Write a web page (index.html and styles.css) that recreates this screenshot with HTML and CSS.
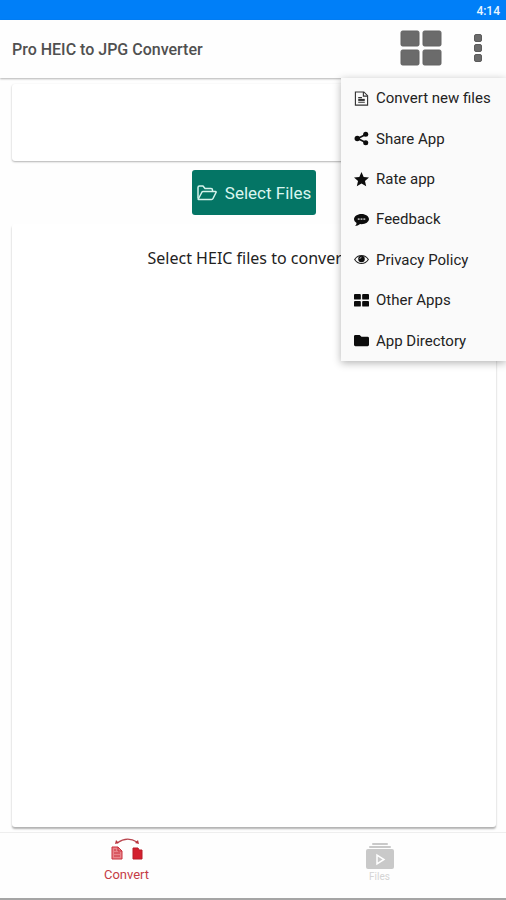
FILE: index.html
```html
<!DOCTYPE html>
<html lang="en">
<head>
    <meta charset="UTF-8">
    <meta name="viewport" content="width=device-width, initial-scale=1.0">
    <title>Pro HEIC to JPG Converter</title>
    <link rel="stylesheet" href="styles.css">
</head>
<body>
    <div class="status-bar">4:14</div>

    <header class="toolbar">
        <h1>Pro HEIC to JPG Converter</h1>
        <button class="icon-button grid-button" aria-label="Other apps">
            <svg width="42" height="36" viewBox="0 0 42 36" fill="#6b6b6b" stroke="#656565">
                <rect x="1" y="1" width="18" height="15" rx="1.5"/>
                <rect x="23" y="1" width="18" height="15" rx="1.5"/>
                <rect x="1" y="20" width="18" height="15" rx="1.5"/>
                <rect x="23" y="20" width="18" height="15" rx="1.5"/>
            </svg>
        </button>
        <button class="icon-button" aria-label="Menu">
            <svg width="8" height="28" viewBox="0 0 8 28" fill="#6b6b6b" stroke="#5c5c5c">
                <rect x=".5" y=".5" width="7" height="7" rx="1.5"/>
                <rect x=".5" y="10.5" width="7" height="7" rx="1.5"/>
                <rect x=".5" y="20.5" width="7" height="7" rx="1.5"/>
            </svg>
        </button>

        <nav class="menu">
            <a href="#">
                <svg viewBox="0 0 16 16"><g fill="none" stroke="#333" stroke-width="1.200"><path d="M1.500 1h9l4 4v10h-13z"/><path d="M10 1v4.500h4M4.500 7h4M4.500 12h7"/><path d="M4.500 9.500h7" stroke-width="2.200"/></g></svg>
                Convert new files
            </a>
            <a href="#">
                <svg viewBox="0 0 16 16"><path d="M13 3.500L4 8l9 4.500" fill="none" stroke="#111" stroke-width="1.800"/><circle cx="12.500" cy="3.500" r="2.700"/><circle cx="3.500" cy="8" r="2.900"/><circle cx="12.500" cy="12.500" r="2.700"/></svg>
                Share App
            </a>
            <a href="#">
                <svg viewBox="0 0 16 16"><path d="M8 0l2.300 5.300 5.700.5-4.300 3.800 1.300 5.700L8 12.300l-5 3 1.300-5.700L0 5.800l5.700-.5z"/></svg>
                Rate app
            </a>
            <a href="#">
                <svg viewBox="0 0 16 16"><path d="M8 2c4.500 0 8 2.500 8 5.500S12.500 13 8 13l-1.500-.1C5 14.300 3 15 1 15c1-1 1.600-2 1.700-3.400C1 10.600 0 9.100 0 7.500 0 4.500 3.500 2 8 2z"/><path d="M4 7.500h2m1 0h2m1 0h2" stroke="#aaa" stroke-width="1.800"/></svg>
                Feedback
            </a>
            <a href="#">
                <svg viewBox="0 0 16 16"><path d="M.7 8C4.300 2.300 11.700 2.300 15.300 8 11.700 13.700 4.300 13.700.7 8z" fill="none" stroke="#222" stroke-width="1.200"/><circle cx="8" cy="7.500" r="3.500"/><path d="M6.200 7.300Q6.400 5.700 8 5.500" fill="none" stroke="#bbb"/></svg>
                Privacy Policy
            </a>
            <a href="#">
                <svg viewBox="0 0 16 16"><rect y="1" width="7.300" height="6" rx="1"/><rect x="8.700" y="1" width="7.300" height="6" rx="1"/><rect y="8.500" width="7.300" height="6" rx="1"/><rect x="8.700" y="8.500" width="7.300" height="6" rx="1"/></svg>
                Other Apps
            </a>
            <a href="#">
                <svg viewBox="0 0 16 16"><path d="M0 3.500Q0 2 1.500 2H6l2 2h6.500Q16 4 16 5.500v7q0 1.500-1.500 1.500h-13Q0 14 0 12.500z"/></svg>
                App Directory
            </a>
        </nav>
    </header>

    <main>
        <section class="card banner"></section>
        <button class="select-button">
            <svg width="20" height="16" viewBox="0 0 20 16" fill="none" stroke="#d5f3ec" stroke-width="1.500" stroke-linejoin="round"><path d="M1 13.500V2.500Q1 1 2.500 1H6l2 2.500h6Q15.500 3.500 15.500 5v1.500"/><path d="M1.300 14L5 7q.3-.5 1-.5h12.500q1 0 .5 1L16 13.500q-.4 1-1.500 1H2q-1 0-.7-.5z"/></svg>
            Select Files
        </button>
        <section class="card files">
            <p>Select HEIC files to convert...</p>
        </section>
    </main>

    <nav class="tabs">
        <a href="#" class="tab active">
            <svg width="34" height="24" viewBox="0 0 34 24">
                <path d="M7 5Q17-2 27 4" fill="none" stroke="#b8454e" stroke-width="1.200"/>
                <path d="M5 6l1-4 3 3zM29 6l-4-1 3-3z" fill="#b8333d"/>
                <path d="M2 9h6l4 4v8H2z" fill="#e8858b" stroke="#c92f3a"/>
                <path d="M8 9v4h4M4 12h2M4 15h6M4 18h6" fill="none" stroke="#c92f3a"/>
                <path d="M23 10h5l1 2h3v9h-9z" fill="#d3202e" stroke="#b91c29"/>
            </svg>
            Convert
        </a>
        <a href="#" class="tab">
            <svg width="28" height="26" viewBox="0 0 28 26" fill="#c9c9c9">
                <rect x="6" width="16" height="2" rx="1"/>
                <rect x="3" y="3" width="22" height="2" rx="1"/>
                <rect y="6" width="28" height="20" rx="2"/>
                <path d="M11 12v9l7-4.500z" fill="none" stroke="#fff" stroke-width="1.500"/>
            </svg>
            <small>Files</small>
        </a>
    </nav>
</body>
</html>
```
FILE: styles.css
```css
* {
    box-sizing: border-box;
}
body {
    margin: 0;
    min-height: 100vh;
    display: flex;
    flex-direction: column;
    background: #fefefe;
    color: #222;
    font-family: Roboto, "Liberation Sans", sans-serif;
}
button {
    border: none;
    cursor: pointer;
    font-family: inherit;
}
a {
    color: inherit;
    text-decoration: none;
}

/* top */
.status-bar {
    height: 20px;
    padding-right: 6px;
    background: #007ff8;
    color: #e8f6ff;
    font-size: 12px;
    font-weight: 500;
    line-height: 22px;
    text-align: right;
}
.toolbar {
    position: relative;
    display: flex;
    align-items: center;
    height: 58px;
    padding: 0 24px 2px 12px;
    background: #fefefe;
    box-shadow: 0 1px 2px rgba(0,0,0,0.3);
}
.toolbar h1 {
    flex: 1;
    margin: 0;
    padding-top: 4px;
    color: #505050;
    font-size: 16px;
    font-weight: 500;
    line-height: 22px;
}
.icon-button {
    display: flex;
    padding: 0;
    background: none;
}
.grid-button {
    margin-right: 32px;
}

/* overflow menu */
.menu {
    position: absolute;
    top: 58px;
    right: 0;
    z-index: 2;
    display: grid;
    width: 165px;
    height: 283px;
    background: #fafafa;
    box-shadow: 0 2px 8px rgba(0,0,0,0.3);
}
.menu a {
    display: flex;
    align-items: center;
    gap: 7px;
    padding-left: 13px;
    font-size: 15px;
}
.menu svg {
    width: 15px;
    height: 15px;
    fill: #0c0c0c;
}

/* content */
main {
    flex: 1;
    display: flex;
    flex-direction: column;
    align-items: center;
    padding: 6px 10px 5px 12px;
}
.card {
    width: 100%;
    background: #fff;
    border-radius: 3px;
    box-shadow: 0 1px 2px rgba(0,0,0,0.3);
}
.banner {
    height: 77px;
}
.select-button {
    display: flex;
    align-items: center;
    gap: 8px;
    height: 45px;
    margin: 9px 0;
    padding: 0 5px;
    border-radius: 3px;
    background: #047565;
    color: #d9f5ef;
    font-size: 17px;
    font-weight: 400;
}
.files {
    flex: 1;
    box-shadow: 0 2px 2px rgba(0,0,0,0.3);
}
.files p {
    margin: 24px 0;
    font-family: "Noto Sans", sans-serif;
    font-size: 16px;
    line-height: 20px;
    text-align: center;
}

/* bottom */
.tabs {
    display: flex;
    height: 68px;
    border-top: 1px solid #eee;
    border-bottom: 2px solid #a5a5a5;
}
.tab {
    flex: 1;
    display: flex;
    flex-direction: column;
    align-items: center;
    gap: 5px;
    padding-top: 5px;
    color: #d4d4d4;
    font-size: 13px;
}
.tab + .tab {
    gap: 2px;
    padding-top: 10px;
}
.tab small {
    font-size: 10px;
}
.active {
    color: #c53c46;
}
```
